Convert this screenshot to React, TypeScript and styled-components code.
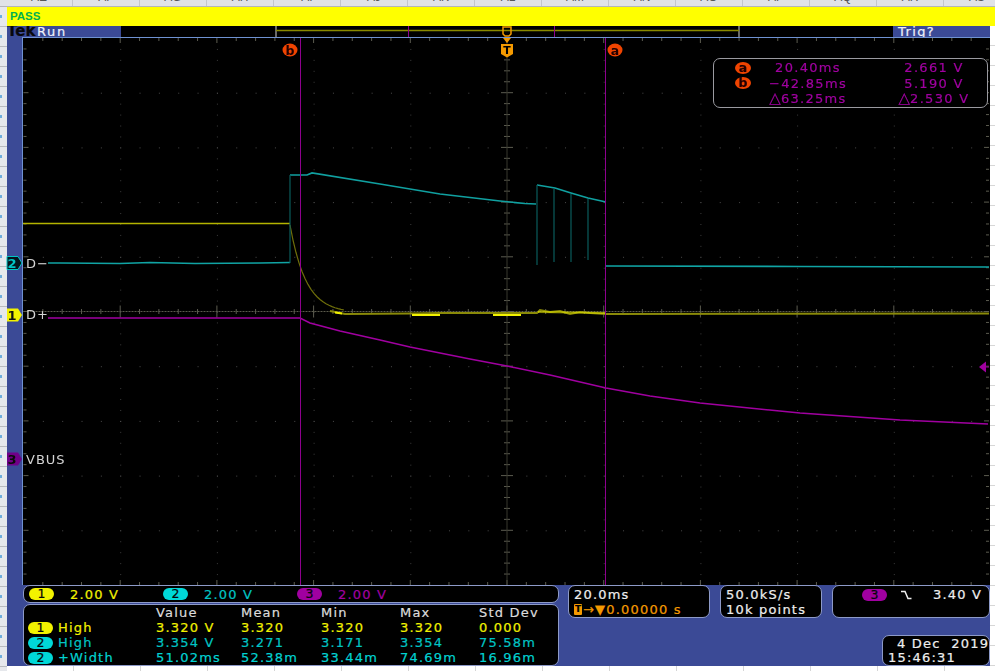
import React from 'react';
import styled, { createGlobalStyle } from 'styled-components';

const BLUE = '#3b4a96';
const EDGE = '#8d9ac8';
const YEL = '#f2f200';
const CYN = '#00c4c4';
const MAG = '#a000a0';
const ORG = '#f59a00';
const RED = '#f04400';
const FONT = `'DejaVu Sans', sans-serif`;

const Global = createGlobalStyle`
  html, body { margin: 0; padding: 0; background: #fff; }
  * { box-sizing: border-box; }
`;

const Sheet = styled.div`
  width: 995px;
  height: 671px;
  display: flex;
  flex-direction: column;
  overflow: hidden;
  background: #fff;
`;

const ColumnHeader = styled.div`
  height: 7px;
  flex-shrink: 0;
  display: flex;
  padding-left: 6px;
  overflow: hidden;
  background: #e1e3e7;
  border-bottom: 1px solid #b4b6ba;
`;

const ColumnCell = styled.div`
  width: 67px;
  flex-shrink: 0;
  border-right: 1px solid #c4c6ca;
  text-align: center;
  font: 12px/12px 'Liberation Sans', sans-serif;
  color: #555;
  margin-top: -9px;
  height: 24px;
`;

const SheetBody = styled.div`
  flex: 1;
  display: flex;
  min-height: 0;
`;

const Gutter = styled.div`
  width: 7px;
  flex-shrink: 0;
  background: #e6e8ec;
  overflow: hidden;
`;

const GutterRow = styled.div`
  height: 20px;
  position: relative;
  border-bottom: 1px solid #b9bbbf;
  &::before {
    content: '';
    position: absolute;
    left: 0;
    top: 8px;
    width: 2px;
    height: 3px;
    background: #6eaede;
  }
`;

const Content = styled.div`
  flex: 1;
  display: flex;
  flex-direction: column;
`;

const PassBar = styled.div`
  height: 19px;
  flex-shrink: 0;
  background: #ffff00;
  padding-left: 3px;
  color: #00b050;
  font: bold 11.5px/19px 'Liberation Sans', sans-serif;
`;

const ScopeRow = styled.div`
  height: 640px;
  flex-shrink: 0;
  display: flex;
`;

const Scope = styled.div`
  width: 983px;
  flex-shrink: 0;
  display: flex;
  flex-direction: column;
  background: ${BLUE};
  font-family: ${FONT};
  -webkit-text-stroke: 0.2px;
  filter: blur(0.35px);
`;

const RightCells = styled.div`
  flex: 1;
  background: repeating-linear-gradient(to bottom, #fff 0 19px, #d6d6d6 19px 20px);
`;

const BottomCells = styled.div`
  flex: 1;
  background: repeating-linear-gradient(to right, #fff 0 66px, #d6d6d6 66px 67px);
`;

const TopBar = styled.div`
  height: 11px;
  flex-shrink: 0;
  display: flex;
  overflow: hidden;
`;

const RunPanel = styled.div`
  width: 114px;
  display: flex;
  align-items: flex-start;
  color: #eef0fa;
  font-size: 13px;
  line-height: 11px;
  letter-spacing: 1.6px;
`;

const TekLogo = styled.span`
  width: 30px;
  color: #08080c;
  font-weight: bold;
  font-size: 15px;
  line-height: 10px;
  letter-spacing: 0;
`;

const Overview = styled.svg`
  width: 772px;
  height: 11px;
  display: block;
  background: #000;
`;

const TrigPanel = styled.div`
  flex: 1;
  padding-left: 5px;
  color: #eef0fa;
  font-size: 13px;
  line-height: 11px;
  letter-spacing: 1.4px;
`;

const Middle = styled.div`
  height: 548px;
  flex-shrink: 0;
  display: flex;
  padding-left: 15px;
`;

const Plot = styled.div`
  flex: 1;
  position: relative;
  background: #000;
  border-top: 1px solid #6f92d2;
  border-left: 1px solid #6f92d2;
`;

const PlotSvg = styled.svg`
  display: block;
  width: 967px;
  height: 547px;
  overflow: visible;
`;

const Readout = styled.div`
  position: absolute;
  left: 690px;
  top: 20px;
  width: 275px;
  height: 50px;
  padding: 1px 0 0 19px;
  display: grid;
  grid-template-columns: 20px 110px 122px;
  grid-auto-rows: 15.5px;
  align-items: center;
  background: #000;
  border: 1px solid #9a9aa0;
  border-radius: 7px;
  color: ${MAG};
  font-size: 13px;
  letter-spacing: 1.3px;
`;

const CursorBadge = styled.span`
  width: 16px;
  height: 12px;
  margin-left: 2px;
  border-radius: 50%;
  background: ${RED};
  color: #200;
  font-size: 12.5px;
  font-weight: bold;
  line-height: 11px;
  letter-spacing: 0;
  text-align: center;
`;

const ReadoutTime = styled.span`
  text-align: center;
  white-space: nowrap;
`;

const ReadoutVolt = styled.span`
  padding-left: 20px;
  text-align: center;
  white-space: nowrap;
`;

const Delta = styled.span`
  font-size: 15px;
  line-height: 12px;
  letter-spacing: 0;
`;

const BottomPanel = styled.div`
  height: 81px;
  flex-shrink: 0;
  display: flex;
  padding-left: 16px;
  gap: 9px;
`;

const LeftStack = styled.div`
  width: 536px;
  display: flex;
  flex-direction: column;
  gap: 1px;
`;

const Box = styled.div`
  background: #000;
  border: 1px solid ${EDGE};
  border-radius: 7px;
  font-size: 13px;
  letter-spacing: 1.2px;
  white-space: nowrap;
`;

const ChannelBox = styled(Box)`
  height: 19px;
  padding-left: 5px;
  display: flex;
  align-items: center;
`;

const ChannelItem = styled.div<{ $color: string }>`
  width: 134px;
  display: flex;
  align-items: center;
  gap: 16px;
  color: ${p => p.$color};
`;

const Pill = styled.span<{ $color: string }>`
  width: 25px;
  height: 12px;
  flex-shrink: 0;
  border-radius: 6px;
  background: ${p => p.$color};
  color: #06060a;
  font-size: 12.5px;
  line-height: 12px;
  letter-spacing: 0;
  text-align: center;
`;

const MeasBox = styled(Box)`
  flex: 1;
  padding-left: 4px;
  display: grid;
  grid-template-columns: 30px 98px 85px 80px 79px 79px 1fr;
  grid-auto-rows: 15px;
  align-items: center;
  align-content: start;
`;

const MeasCell = styled.span<{ $color: string }>`
  color: ${p => p.$color};
`;

const RightStack = styled.div`
  flex: 1;
  display: flex;
  flex-direction: column;
  justify-content: space-between;
`;

const InfoRow = styled.div`
  height: 33px;
  display: flex;
  gap: 10px;
`;

const TimeBox = styled(Box)`
  width: 142px;
  padding: 1px 0 0 5px;
  color: #eee;
  line-height: 15px;
`;

const TimeOffset = styled.div`
  display: flex;
  align-items: center;
  height: 15px;
  color: ${ORG};
`;

const TMark = styled.span`
  width: 8px;
  height: 11px;
  margin-right: 1px;
  border-radius: 1px;
  background: ${ORG};
  color: #000;
  font-size: 9px;
  font-weight: bold;
  line-height: 11px;
  letter-spacing: 0;
  text-align: center;
`;

const SampleBox = styled(Box)`
  width: 102px;
  padding: 1px 0 0 5px;
  color: #eee;
  line-height: 15px;
`;

const TrigBox = styled(Box)`
  flex: 1;
  height: 33px;
  padding: 3px 0 0 29px;
  display: flex;
  align-items: flex-start;
  color: #eee;
  line-height: 12px;
`;

const EdgeIcon = styled.svg`
  width: 12px;
  height: 12px;
  margin: 0 21px 0 13px;
  flex-shrink: 0;
`;

const DateBox = styled(Box)`
  width: 108px;
  height: 31px;
  margin-left: auto;
  padding: 1px 0 0 5px;
  color: #eee;
  line-height: 14px;
`;

const DateLine = styled.div`
  padding-left: 9px;
  white-space: pre;
`;

const COLUMNS = ['AE', 'AF', 'AG', 'AH', 'AI', 'AJ', 'AK', 'AL', 'AM', 'AN', 'AO', 'AP', 'AQ', 'AR', 'AS'];

const MEAS = [
  { num: '1', label: 'High', color: YEL, vals: ['3.320 V', '3.320', '3.320', '3.320', '0.000'] },
  { num: '2', label: 'High', color: CYN, vals: ['3.354 V', '3.271', '3.171', '3.354', '75.58m'] },
  { num: '2', label: '+Width', color: '#00d2d2', vals: ['51.02ms', '52.38m', '33.44m', '74.69m', '16.96m'] },
];

const X0 = 23.5;
const DX = 96.7;
const Y0 = 38;
const DY = 54.7;
const CX = X0 + DX * 5;
const CY = Y0 + DY * 5;

const pts = (list: number[][]) => list.map(p => p.join(',')).join(' ');

function Graticule() {
  const dots: React.ReactNode[] = [];
  for (let i = 1; i < 10; i++) {
    for (let j = 1; j < 50; j++) {
      if (i !== 5) dots.push(<rect key={`v${i}-${j}`} x={X0 + DX * i} y={Y0 + (DY / 5) * j} width="1" height="1" fill={j % 5 === 0 ? '#666' : '#3c3c3c'} />);
    }
  }
  for (let j = 1; j < 10; j++) {
    for (let i = 1; i < 50; i++) {
      if (j !== 5 && i % 5 !== 0) dots.push(<rect key={`h${j}-${i}`} x={X0 + (DX / 5) * i} y={Y0 + DY * j} width="1" height="1" fill="#4a4a4a" />);
    }
  }
  const ticks: React.ReactNode[] = [];
  for (let i = 1; i < 50; i++) {
    const x = X0 + (DX / 5) * i;
    const big = i % 5 === 0;
    const len = big ? 5 : 3;
    ticks.push(<line key={`t${i}`} x1={x} x2={x} y1={Y0} y2={Y0 + len} />);
    ticks.push(<line key={`b${i}`} x1={x} x2={x} y1={585} y2={585 - len} />);
    ticks.push(<line key={`c${i}`} x1={x} x2={x} y1={CY - (big ? 6 : 2.5)} y2={CY + (big ? 6 : 2.5)} />);
    const y = Y0 + (DY / 5) * i;
    ticks.push(<line key={`l${i}`} x1={X0} x2={X0 + len} y1={y} y2={y} />);
    ticks.push(<line key={`r${i}`} x1={989} x2={989 - len} y1={y} y2={y} />);
    ticks.push(<line key={`m${i}`} x1={CX - (big ? 6 : 3)} x2={CX + (big ? 6 : 3)} y1={y} y2={y} />);
  }
  return (
    <g>
      {dots}
      <g stroke="#5c5c50" strokeWidth="1">{ticks}</g>
      <line x1={X0} x2={989} y1={CY} y2={CY} stroke="#5a5a4c" strokeDasharray="2 1" />
      <line x1={CX} x2={CX} y1={Y0} y2={585} stroke="#38382e" />
    </g>
  );
}

function Traces() {
  const decay: number[][] = [];
  for (let x = 290; x <= 345; x += 3) decay.push([x, 313 - 88 * Math.exp(-(x - 290) / 16)]);
  return (
    <g fill="none">
      <line x1={23} x2={290} y1={223.5} y2={223.5} stroke="#b4b400" strokeWidth="1.6" />
      <polyline points={pts(decay)} stroke="#6e6e0a" strokeWidth="1.2" />
      <polyline
        points={pts([[330, 311], [345, 314], [411, 313.5], [440, 313], [493, 313], [537, 313], [540, 310], [550, 312], [560, 311], [570, 314], [580, 312], [590, 313], [606, 314], [989, 313.5]])}
        stroke="#8a8a08"
        strokeWidth="2"
      />
      <g stroke={YEL} strokeWidth="2">
        <line x1={412} x2={440} y1={315} y2={315} />
        <line x1={493} x2={521} y1={315} y2={315} />
        <line x1={335} x2={342} y1={312.5} y2={313.5} />
        <line x1={538} x2={606} y1={312} y2={313} strokeOpacity="0.55" />
      </g>
      <polyline
        points={pts([[48, 263], [60, 263], [120, 263.5], [150, 262.5], [195, 263.5], [260, 263], [290, 262.5]])}
        stroke="#10a4a4"
        strokeWidth="1.7"
      />
      <polyline
        points={pts([[290, 175], [307, 175], [312, 173], [380, 184], [440, 194], [500, 201], [525, 203.5], [536, 204]])}
        stroke="#10a0a0"
        strokeWidth="1.7"
      />
      <polyline points={pts([[537, 185], [555, 188], [571, 193], [588, 198], [606, 202]])} stroke="#10a0a0" strokeWidth="1.7" />
      <polyline points={pts([[606, 266], [800, 266.5], [989, 267]])} stroke="#10a4a4" strokeWidth="1.7" />
      <g stroke="#0a5c5c" strokeWidth="1.2">
        <line x1={290} x2={290} y1={175} y2={263} />
        <line x1={537} x2={537} y1={185} y2={265} />
        <line x1={554} x2={554} y1={189} y2={262} />
        <line x1={571} x2={571} y1={194} y2={262} />
        <line x1={588} x2={588} y1={199} y2={260} />
      </g>
      <polyline
        points={pts([[48, 318], [300, 318], [310, 323], [340, 331], [380, 340], [410, 347], [470, 359], [507, 366], [550, 375], [606, 388], [650, 396], [700, 403], [800, 413], [900, 420], [988, 424]])}
        stroke={MAG}
        strokeWidth="1.5"
      />
    </g>
  );
}

function Markers() {
  return (
    <g fontFamily={FONT}>
      <line x1={300.5} x2={300.5} y1={38} y2={585} stroke="#8e008e" />
      <line x1={605.5} x2={605.5} y1={38} y2={585} stroke="#8e008e" />
      <ellipse cx={290} cy={50} rx={7.5} ry={6.5} fill={RED} />
      <text x={290} y={54.5} fontSize="12.5" fontWeight="bold" textAnchor="middle" fill="#200">b</text>
      <ellipse cx={615} cy={50} rx={7.5} ry={6.5} fill={RED} />
      <text x={615} y={54.5} fontSize="12.5" fontWeight="bold" textAnchor="middle" fill="#200">a</text>

      <path d="M503 27h8v7l-2 2h-4l-2-2z" fill="none" stroke={ORG} strokeWidth="1.5" />
      <path d="M503 38h8l-4 5z" fill={ORG} />
      <path d="M501 44h12v10l-6 3.5-6-3.5z" fill={ORG} />
      <text x={507} y={54} fontSize="11" fontWeight="bold" textAnchor="middle" fill="#000">T</text>

      <path d="M979 367l7-5.500v11z" fill={MAG} />
      <line x1={985} x2={989} y1={367} y2={367} stroke={MAG} />

      <path d="M7 256.500h11l4 6.500-4 6.500H7z" fill="#04141c" stroke={CYN} strokeWidth="1" />
      <text x={12} y={268} fontSize="13" fontWeight="bold" textAnchor="middle" fill={CYN}>2</text>
      <path d="M7 308.500h11l4 6.500-4 6.500H7z" fill={YEL} />
      <text x={12} y={320} fontSize="13" fontWeight="bold" textAnchor="middle" fill="#111">1</text>
      <path d="M7 452.500h11l4 6.500-4 6.500H7z" fill="#700088" />
      <text x={12} y={464} fontSize="13" fontWeight="bold" textAnchor="middle" fill="#0a0a0a">3</text>

      <g fontSize="13" fill="#d4d4d4" letterSpacing="1">
        <text x={26} y={268}>D−</text>
        <text x={26} y={319}>D+</text>
        <text x={26} y={464}>VBUS</text>
      </g>
    </g>
  );
}

function App() {
  return (
    <Sheet>
      <Global />
      <ColumnHeader>
        {COLUMNS.map(c => <ColumnCell key={c}>{c}</ColumnCell>)}
      </ColumnHeader>
      <SheetBody>
        <Gutter>
          {Array.from({ length: 34 }, (_, i) => <GutterRow key={i} />)}
        </Gutter>
        <Content>
          <PassBar>PASS</PassBar>
          <ScopeRow>
            <Scope>
              <TopBar>
                <RunPanel><TekLogo>Tek</TekLogo>Run</RunPanel>
                <Overview viewBox="121 26 772 11">
                  <path d="M276 37V26M739 37V26" stroke="#8c8c8c" strokeWidth="1.5" fill="none" />
                  <line x1={276} x2={739} y1={30.5} y2={30.5} stroke="#8a8a00" strokeWidth="1.5" />
                  <line x1={408.500} x2={408.500} y1={26} y2={37} stroke="#8e008e" />
                  <line x1={554.500} x2={554.500} y1={26} y2={37} stroke="#8e008e" />
                </Overview>
                <TrigPanel>Trig?</TrigPanel>
              </TopBar>
              <Middle>
                <Plot>
                  <PlotSvg viewBox="23 38 967 547">
                    <Graticule />
                    <Traces />
                    <Markers />
                  </PlotSvg>
                  <Readout>
                    <CursorBadge>a</CursorBadge>
                    <ReadoutTime>20.40ms</ReadoutTime>
                    <ReadoutVolt>2.661 V</ReadoutVolt>
                    <CursorBadge>b</CursorBadge>
                    <ReadoutTime>−42.85ms</ReadoutTime>
                    <ReadoutVolt>5.190 V</ReadoutVolt>
                    <span />
                    <ReadoutTime><Delta>△</Delta>63.25ms</ReadoutTime>
                    <ReadoutVolt><Delta>△</Delta>2.530 V</ReadoutVolt>
                  </Readout>
                </Plot>
              </Middle>
              <BottomPanel>
                <LeftStack>
                  <ChannelBox>
                    <ChannelItem $color={YEL}><Pill $color={YEL}>1</Pill>2.00 V</ChannelItem>
                    <ChannelItem $color={CYN}><Pill $color="#00d8d8">2</Pill>2.00 V</ChannelItem>
                    <ChannelItem $color={MAG}><Pill $color={MAG}>3</Pill>2.00 V</ChannelItem>
                  </ChannelBox>
                  <MeasBox>
                    <span />
                    <span />
                    {['Value', 'Mean', 'Min', 'Max', 'Std Dev'].map(h => <MeasCell key={h} $color="#dcdcdc">{h}</MeasCell>)}
                    {MEAS.map((m, i) => (
                      <React.Fragment key={i}>
                        <Pill $color={m.num === '1' ? YEL : '#00d8d8'}>{m.num}</Pill>
                        <MeasCell $color={m.color}>{m.label}</MeasCell>
                        {m.vals.map((v, k) => <MeasCell key={k} $color={m.color}>{v}</MeasCell>)}
                      </React.Fragment>
                    ))}
                  </MeasBox>
                </LeftStack>
                <RightStack>
                  <InfoRow>
                    <TimeBox>
                      20.0ms
                      <TimeOffset><TMark>T</TMark>→▼0.00000 s</TimeOffset>
                    </TimeBox>
                    <SampleBox>50.0kS/s<br />10k points</SampleBox>
                    <TrigBox>
                      <Pill $color={MAG}>3</Pill>
                      <EdgeIcon viewBox="0 0 12 12">
                        <path d="M1 2.500h4l3 7h3.500" fill="none" stroke="#eee" strokeWidth="1.500" />
                      </EdgeIcon>
                      3.40 V
                    </TrigBox>
                  </InfoRow>
                  <DateBox>
                    <DateLine>4 Dec  2019</DateLine>
                    15:46:31
                  </DateBox>
                </RightStack>
              </BottomPanel>
            </Scope>
            <RightCells />
          </ScopeRow>
          <BottomCells />
        </Content>
      </SheetBody>
    </Sheet>
  );
}

export default App;
